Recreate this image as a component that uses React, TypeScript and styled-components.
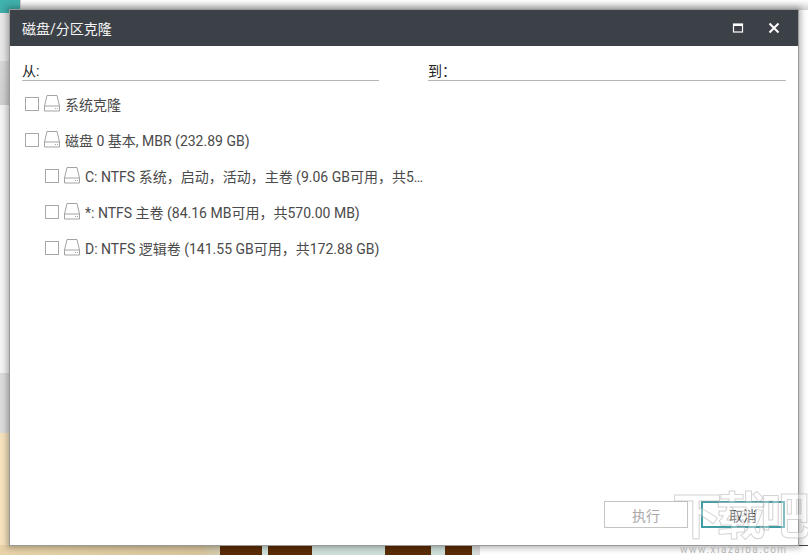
import React from 'react';
import styled, { createGlobalStyle } from 'styled-components';

const rows = [
  { label: '系统克隆', level: 0 },
  { label: '磁盘 0 基本, MBR (232.89 GB)', level: 0 },
  { label: 'C: NTFS 系统，启动，活动，主卷 (9.06 GB可用，共58.59 GB)', level: 1 },
  { label: '*: NTFS 主卷 (84.16 MB可用，共570.00 MB)', level: 1 },
  { label: 'D: NTFS 逻辑卷 (141.55 GB可用，共172.88 GB)', level: 1 },
];

const App: React.FC = () => {
  return (
    <Desktop>
      <GlobalStyle />
      <TealCorner />
      <BackWindow />
      <SideStrip />
      <Sand />
      <Photo>
        <Leg $left={20} $width={42} />
        <Leg $left={68} $width={44} />
        <Leg $left={185} $width={46} />
        <Leg $left={245} $width={27} />
      </Photo>
      <PageEdge />
      <Dialog>
        <TitleBar>
          <Title>磁盘/分区克隆</Title>
          <WindowButtons>
            <svg width="12" height="12" viewBox="0 0 12 12" fill="none" stroke="#fff">
              <rect x="1.5" y="2" width="9" height="8" strokeWidth="1.2" />
              <line x1="1" y1="3" x2="11" y2="3" strokeWidth="2" />
            </svg>
            <svg width="12" height="12" viewBox="0 0 12 12" fill="none" stroke="#fff" strokeWidth="2">
              <path d="M1.5 1.5 10.5 10.5M10.5 1.5 1.5 10.5" />
            </svg>
          </WindowButtons>
        </TitleBar>
        <Content>
          <Targets>
            <Target>从:</Target>
            <Target>到：</Target>
          </Targets>
          <Tree>
            {rows.map((row) => (
              <Row key={row.label} $level={row.level}>
                <Check />
                <DriveIcon />
                <RowLabel>{row.label}</RowLabel>
              </Row>
            ))}
          </Tree>
          <Footer>
            <Button disabled>执行</Button>
            <Button $primary>取消</Button>
          </Footer>
        </Content>
      </Dialog>
      <Watermark>
        <Logo>下载吧</Logo>
        <Url>www.xiazaiba.com</Url>
      </Watermark>
    </Desktop>
  );
};

const DriveIcon = () => (
  <Drive width="17" height="17" viewBox="0 0 17 17" fill="none" stroke="#a3a3a3" strokeWidth="1">
    <path d="M3 .5h10l2.5 10.5v5H.5v-5z" />
    <path d="M.5 11h15" />
    <path d="M11 13.5h1M13 13.5h1" />
  </Drive>
);

const GlobalStyle = createGlobalStyle`
  html, body {
    margin: 0;
    padding: 0;
    background: #fff;
  }
`;

const Desktop = styled.div`
  position: relative;
  width: 808px;
  height: 555px;
  overflow: hidden;
  background: #fff;
  font-family: Roboto, 'Noto Sans CJK SC', sans-serif;
`;

const TealCorner = styled.div`
  position: absolute;
  left: 0;
  top: 0;
  width: 20px;
  height: 13px;
  background: #3fb0ac;
`;

const BackWindow = styled.div`
  position: absolute;
  left: 20px;
  top: 0;
  width: 788px;
  height: 10px;
  box-sizing: border-box;
  border-left: 1px solid #c9c9c9;
  background: linear-gradient(#ffffff, #d4d4d4);
`;

const SideStrip = styled.div`
  position: absolute;
  left: 0;
  top: 13px;
  width: 10px;
  height: 420px;
  background: linear-gradient(
    #e8e8e8 0,
    #e8e8e8 48px,
    #d8d8d8 48px,
    #d0d0d0 92px,
    #f4f4f4 92px,
    #f4f4f4 360px,
    #dcdcdc 360px
  );
`;

const Sand = styled.div`
  position: absolute;
  left: 0;
  top: 433px;
  width: 10px;
  height: 122px;
  background: #f6e2bd;
`;

const Photo = styled.div`
  position: absolute;
  left: 0;
  top: 545px;
  width: 474px;
  height: 10px;
  background: linear-gradient(90deg, #e8d3a8, #d9c69c 200px, #cfe0da 260px, #cfe0da);
`;

const Leg = styled.div<{ $left: number; $width: number }>`
  position: absolute;
  top: 0;
  bottom: 0;
  left: ${(p) => p.$left + 200}px;
  width: ${(p) => p.$width}px;
  background: #5a2c05;
`;

const PageEdge = styled.div`
  position: absolute;
  left: 474px;
  top: 545px;
  width: 334px;
  height: 10px;
  box-sizing: border-box;
  border-left: 6px solid #dcdcdc;
  border-top: 1px solid #444;
  background: #fff;
`;

/* the window sits on a desktop, so its place is the content */
const Dialog = styled.div`
  position: absolute;
  left: 10px;
  top: 10px;
  width: 788px;
  height: 535px;
  display: flex;
  flex-direction: column;
  background: #fff;
  box-shadow: 0 0 0 1px #9a9a9a, 0 0 6px 3px rgba(0, 0, 0, 0.3);
`;

const TitleBar = styled.div`
  flex: 0 0 36px;
  display: flex;
  align-items: center;
  justify-content: space-between;
  padding: 0 18px 0 12px;
  background: #3c4148;
`;

const Title = styled.div`
  color: #f4f4f4;
  font-size: 14px;
  margin-top: -1px;
`;

const WindowButtons = styled.div`
  display: flex;
  align-items: center;
  gap: 24px;
`;

const Content = styled.div`
  flex: 1;
  display: flex;
  flex-direction: column;
  padding: 0 12px 17px;
  min-height: 0;
`;

const Targets = styled.div`
  display: grid;
  grid-template-columns: 357px 1fr;
  column-gap: 49px;
  margin-top: 16px;
`;

const Target = styled.div`
  height: 18px;
  line-height: 18px;
  border-bottom: 1px solid #b5b5b5;
  color: #222;
  font-size: 14px;
`;

const Tree = styled.div`
  flex: 1;
  display: flex;
  flex-direction: column;
  margin-top: 5px;
`;

const Row = styled.div<{ $level: number }>`
  height: 36px;
  display: flex;
  align-items: center;
  padding-left: ${(p) => 3 + p.$level * 20}px;
`;

const Check = styled.span`
  flex: none;
  width: 12px;
  height: 12px;
  margin-top: -1px;
  border: 1px solid #a8a8a8;
  margin-right: 5px;
`;

const Drive = styled.svg`
  flex: none;
  margin-top: -2px;
`;

const RowLabel = styled.span`
  margin-left: 4px;
  max-width: 340px;
  overflow: hidden;
  white-space: nowrap;
  text-overflow: ellipsis;
  color: #4a4a4a;
  font-size: 14px;
`;

const Footer = styled.div`
  display: flex;
  justify-content: flex-end;
  gap: 13px;
  padding-right: 1px;
`;

const Button = styled.button<{ $primary?: boolean }>`
  width: 84px;
  height: 27px;
  padding: 0;
  box-sizing: border-box;
  background: transparent;
  border: ${(p) => (p.$primary ? '2px solid #3f9ca3' : '1px solid #c4c4c4')};
  color: ${(p) => (p.$primary ? '#444' : '#a8a8a8')};
  font-family: inherit;
  font-size: 14px;
`;

/* site stamp laid over the bottom right corner */
const Watermark = styled.div`
  position: absolute;
  left: 672px;
  top: 489px;
  width: 136px;
  display: flex;
  flex-direction: column;
  pointer-events: none;
`;

const Logo = styled.div`
  font-size: 50px;
  line-height: 56px;
  font-weight: 700;
  white-space: nowrap;
  letter-spacing: -6px;
  color: rgba(255, 255, 255, 0.35);
  -webkit-text-stroke: 1px rgba(170, 170, 170, 0.5);
`;

const Url = styled.div`
  font-size: 10px;
  line-height: 10px;
  white-space: nowrap;
  color: #b5b5b5;
  letter-spacing: 1.5px;
  padding-left: 8px;
`;

export default App;
